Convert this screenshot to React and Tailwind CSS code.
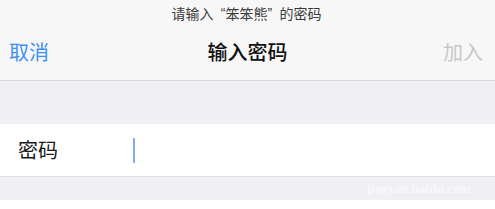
import React from 'react';

const font = { fontFamily: '"Noto Sans CJK SC", "Noto Sans", sans-serif' };
const latin = { fontFamily: '"Liberation Sans", sans-serif' };

export default function App() {
  return (
    <div className="w-[495px] h-[209px] flex flex-col bg-white overflow-hidden" style={font}>
      {/* header */}
      <div className="h-[80px] bg-[#f7f7f7] flex flex-col">
        <div className="h-[25px] flex items-center justify-center text-[14px] text-[#3a3a3a] leading-none pr-[2px]">
          <span>请输入</span>
          <span className="inline-block w-[12px] text-right" style={latin}>“</span>
          <span>笨笨熊</span>
          <span className="inline-block w-[12px] text-left" style={latin}>”</span>
          <span>的密码</span>
        </div>
        <div className="flex-1 flex items-center justify-between px-[9px] pb-[2px]">
          <button className="text-[20px] leading-none text-[#3d8ff5] w-[60px] text-left">取消</button>
          <div className="text-[20px] leading-none font-medium text-[#111]">输入密码</div>
          <button className="text-[20px] leading-none text-[#c8c8c8] w-[60px] text-right pr-[3px]">加入</button>
        </div>
      </div>
      <div className="h-px bg-[#d8d8dc]" />

      <div className="h-[43px] bg-[#efeff4]" />

      {/* password row */}
      <div className="h-[52px] bg-white flex items-center pl-[18px]">
        <span className="text-[20px] leading-none text-[#1a1a1a] w-[115px]">密码</span>
        <span className="w-[2px] h-[25px] bg-[#8aa6f7]" />
      </div>
      <div className="h-px bg-[#e0e0e4]" />

      <div className="h-[23px] bg-[#efeff4] flex items-center justify-end pr-[25px]">
        <span className="text-[13px] leading-none text-white/60 font-bold" style={{ fontFamily: '"Liberation Serif", serif' }}>
          jingyan.baidu.com
        </span>
      </div>
      <div className="flex-1 bg-white" />
    </div>
  );
}
